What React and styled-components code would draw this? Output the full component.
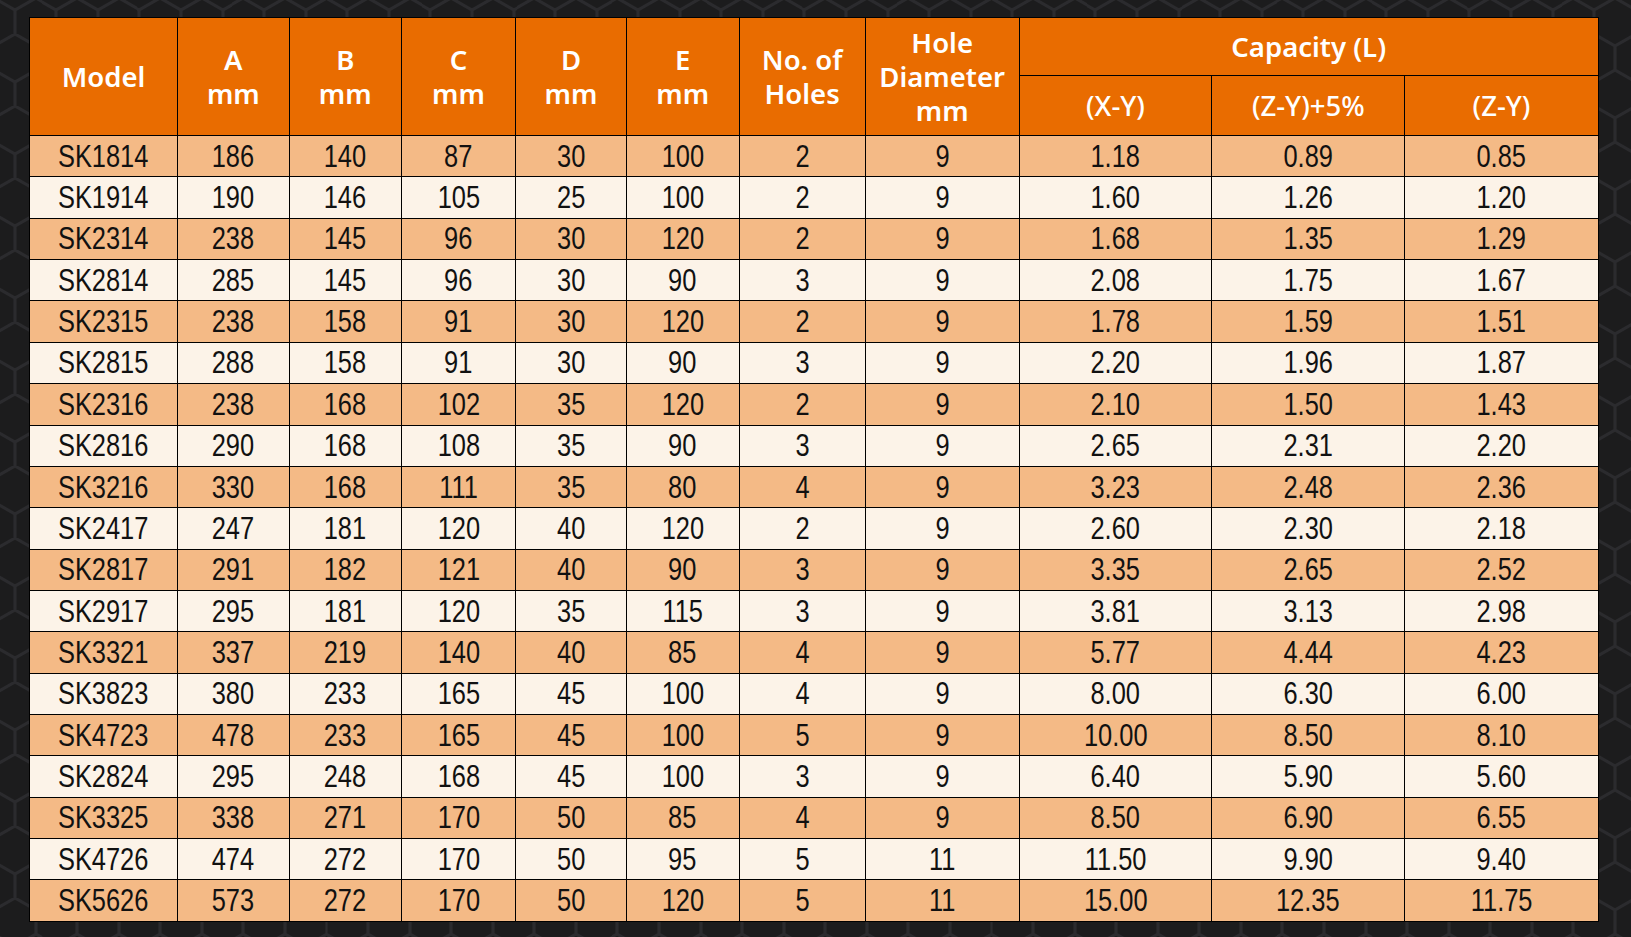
import React from 'react';
import styled, { createGlobalStyle } from 'styled-components';

// honeycomb tile, pointy-top hexagons (s = 24)
const hexTile = encodeURIComponent(
  `<svg xmlns="http://www.w3.org/2000/svg" width="41.57" height="72" viewBox="0 0 41.57 72">` +
    `<path d="M20.78 0 L41.57 12 L41.57 36 L20.78 48 L0 36 L0 12 Z M20.78 48 L20.78 72" fill="none" stroke="#2b2b2e" stroke-width="3"/>` +
    `</svg>`
);

const GlobalStyle = createGlobalStyle`
  html, body {
    margin: 0;
    padding: 0;
    background-color: #1c1c1d;
  }
  body {
    font-family: 'Noto Sans', sans-serif;
  }
`;

const Page = styled.div`
  min-height: 100vh;
  box-sizing: border-box;
  padding: 17px 33px 16px 29px;
  background-color: #1c1c1d;
  background-image: url("data:image/svg+xml,${hexTile}");
  background-position: -6px -38px;
`;

const Table = styled.table`
  width: 1569px;
  table-layout: fixed;
  border-collapse: collapse;
  border: 1px solid #000;
`;

const HeadCell = styled.th`
  background: #e96c00;
  color: #fff;
  font-family: 'Noto Sans', 'Open Sans', sans-serif;
  font-weight: ${(p) => (p.$light ? 500 : 600)};
  font-size: 27.5px;
  line-height: 34px;
  text-align: center;
  vertical-align: middle;
  padding: 0;
  border: 1px solid #000;
`;

const HeadRow = styled.tr`
  height: ${(p) => p.$h}px;
`;

const Row = styled.tr`
  height: 41.37px;
  background: ${(p) => (p.$odd ? '#f4ba86' : '#fcf3e8')};
`;

const Cell = styled.td`
  font-family: 'Liberation Sans', Arial, sans-serif;
  font-size: 31px;
  line-height: 1;
  color: #111;
  text-align: center;
  vertical-align: middle;
  padding: 0;
  border: 1px solid #000;
  white-space: nowrap;
`;

// Arial Narrow look: squeeze Liberation Sans horizontally
const Narrow = styled.span`
  display: inline-block;
  transform: scaleX(0.82);
  transform-origin: center;
`;

const widths = [148, 111.7, 112, 114.6, 110.4, 113, 126, 154, 192.6, 193, 193.4];

const rows = [
  ['SK1814', 186, 140, 87, 30, 100, 2, 9, '1.18', '0.89', '0.85'],
  ['SK1914', 190, 146, 105, 25, 100, 2, 9, '1.60', '1.26', '1.20'],
  ['SK2314', 238, 145, 96, 30, 120, 2, 9, '1.68', '1.35', '1.29'],
  ['SK2814', 285, 145, 96, 30, 90, 3, 9, '2.08', '1.75', '1.67'],
  ['SK2315', 238, 158, 91, 30, 120, 2, 9, '1.78', '1.59', '1.51'],
  ['SK2815', 288, 158, 91, 30, 90, 3, 9, '2.20', '1.96', '1.87'],
  ['SK2316', 238, 168, 102, 35, 120, 2, 9, '2.10', '1.50', '1.43'],
  ['SK2816', 290, 168, 108, 35, 90, 3, 9, '2.65', '2.31', '2.20'],
  ['SK3216', 330, 168, 111, 35, 80, 4, 9, '3.23', '2.48', '2.36'],
  ['SK2417', 247, 181, 120, 40, 120, 2, 9, '2.60', '2.30', '2.18'],
  ['SK2817', 291, 182, 121, 40, 90, 3, 9, '3.35', '2.65', '2.52'],
  ['SK2917', 295, 181, 120, 35, 115, 3, 9, '3.81', '3.13', '2.98'],
  ['SK3321', 337, 219, 140, 40, 85, 4, 9, '5.77', '4.44', '4.23'],
  ['SK3823', 380, 233, 165, 45, 100, 4, 9, '8.00', '6.30', '6.00'],
  ['SK4723', 478, 233, 165, 45, 100, 5, 9, '10.00', '8.50', '8.10'],
  ['SK2824', 295, 248, 168, 45, 100, 3, 9, '6.40', '5.90', '5.60'],
  ['SK3325', 338, 271, 170, 50, 85, 4, 9, '8.50', '6.90', '6.55'],
  ['SK4726', 474, 272, 170, 50, 95, 5, 11, '11.50', '9.90', '9.40'],
  ['SK5626', 573, 272, 170, 50, 120, 5, 11, '15.00', '12.35', '11.75'],
];

const dims = ['A', 'B', 'C', 'D', 'E'];

export default function App() {
  return (
    <>
      <GlobalStyle />
      <Page>
        <Table>
          <colgroup>
            {widths.map((w, i) => (
              <col key={i} style={{ width: w }} />
            ))}
          </colgroup>
          <thead>
            <HeadRow $h={58}>
              <HeadCell rowSpan={2}>Model</HeadCell>
              {dims.map((d) => (
                <HeadCell key={d} rowSpan={2}>
                  {d}
                  <br />
                  mm
                </HeadCell>
              ))}
              <HeadCell rowSpan={2}>
                No. of
                <br />
                Holes
              </HeadCell>
              <HeadCell rowSpan={2}>
                Hole
                <br />
                Diameter
                <br />
                mm
              </HeadCell>
              <HeadCell colSpan={3}>Capacity (L)</HeadCell>
            </HeadRow>
            <HeadRow $h={60}>
              <HeadCell $light>(X-Y)</HeadCell>
              <HeadCell $light>(Z-Y)+5%</HeadCell>
              <HeadCell $light>(Z-Y)</HeadCell>
            </HeadRow>
          </thead>
          <tbody>
            {rows.map((r, i) => (
              <Row key={r[0]} $odd={i % 2 === 0}>
                {r.map((v, j) => (
                  <Cell key={j}>
                    <Narrow>{v}</Narrow>
                  </Cell>
                ))}
              </Row>
            ))}
          </tbody>
        </Table>
      </Page>
    </>
  );
}
